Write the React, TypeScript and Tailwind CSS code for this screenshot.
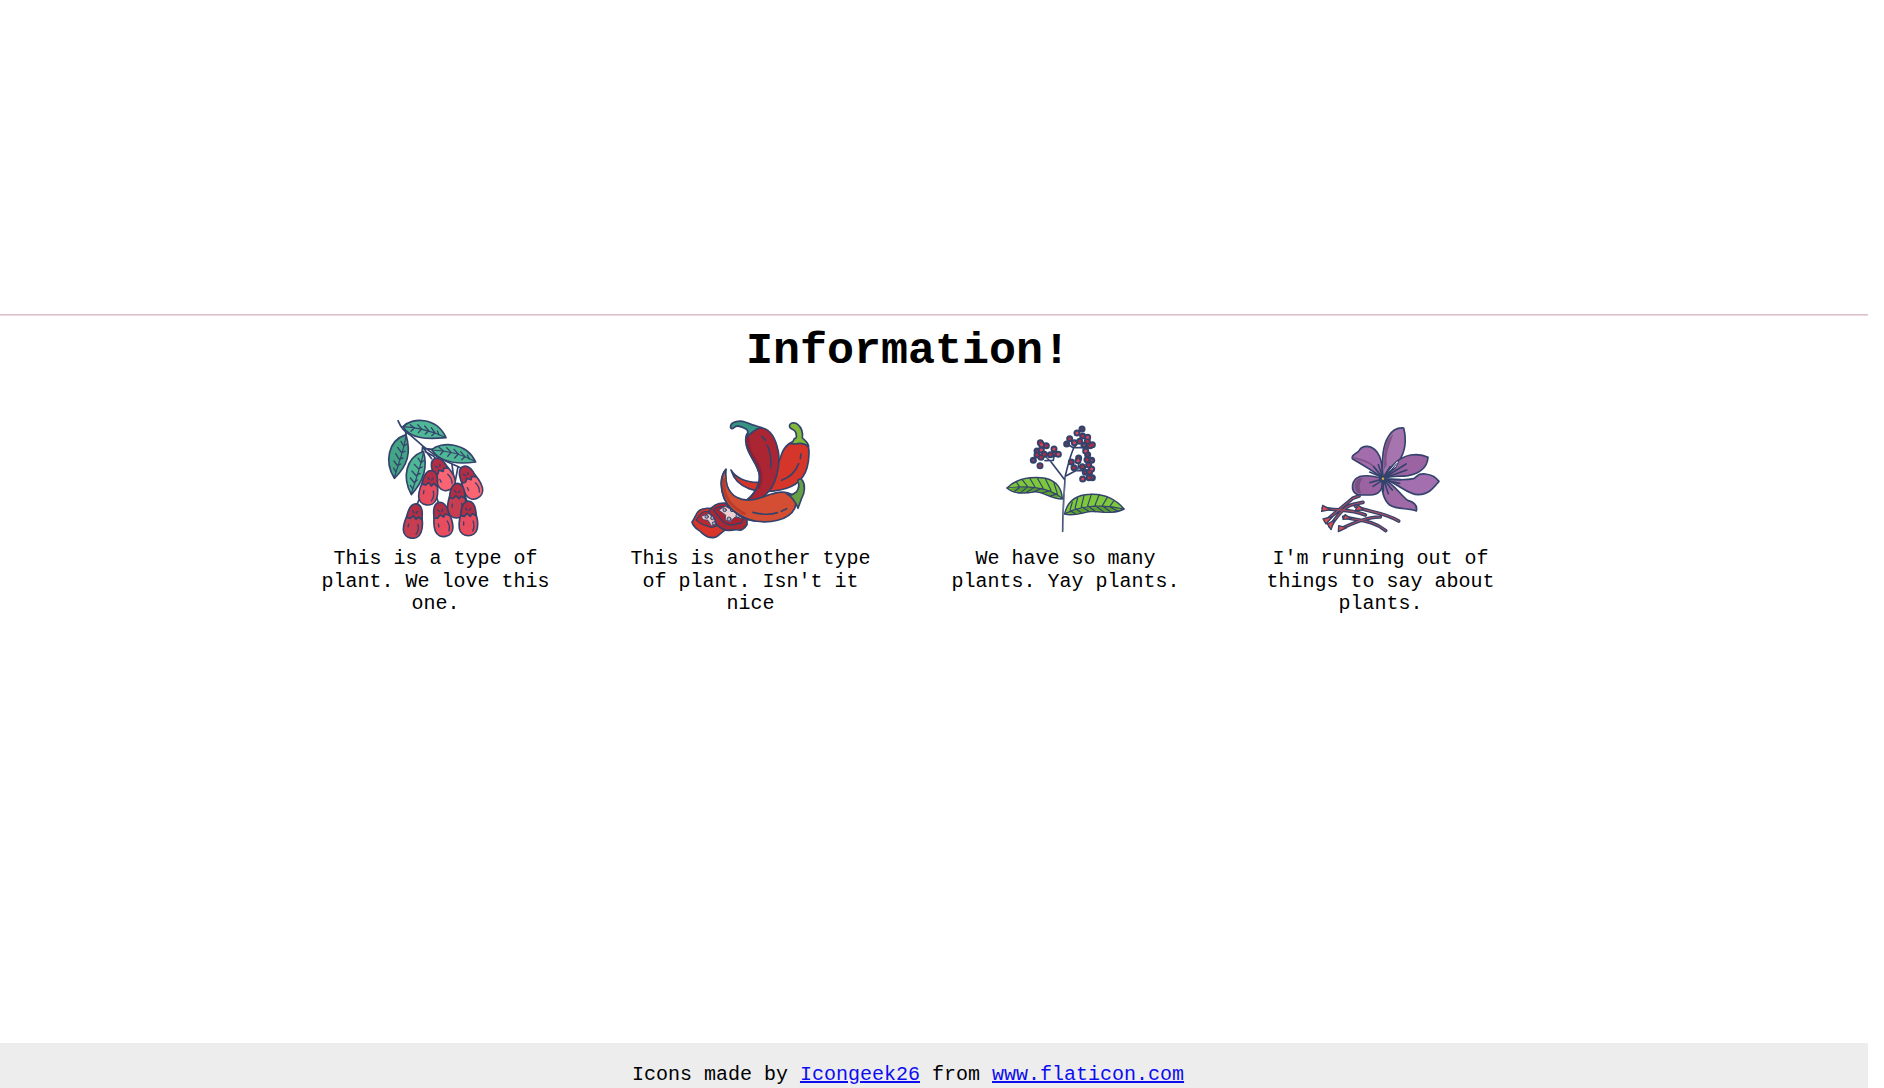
import React from "react";

const INK = "#34436c";

function Leaf({ d, vein, ribs, fill }: { d: string; vein: string; ribs: string; fill: string }) {
  return (
    <g>
      <path d={d} fill={fill} />
      <path d={vein} fill="none" strokeWidth="3.5" />
      <path d={ribs} fill="none" strokeWidth="4" />
    </g>
  );
}

function Berry({ x, y, r, body = "#e94b5f" }: { x: number; y: number; r: number; body?: string }) {
  return (
    <g transform={`translate(${x} ${y}) rotate(${r})`}>
      <path d="M-17 -30C-24 -12 -30 8 -27 28C-22 57 21 58 27 28C31 8 25 -12 18 -30Z" fill={body} />
      <path d="M-23 -10C-22 -36 -15 -53 0 -54C15 -53 23 -36 23 -10L12 -16L6 -8L-4 -17L-12 -8Z" fill="#b32d45" />
      <path d="M14 6C18 16 18 27 13 36M-14 9V18M-8 -32L-3 -26M7 -32L4 -26" fill="none" strokeWidth="4" />
    </g>
  );
}

function BerryBranch() {
  return (
    <svg viewBox="15 41 360 360" className="-ml-px size-[120px]" stroke={INK} strokeWidth="5" strokeLinejoin="round" strokeLinecap="round">
      <path d="M84 46C92 66 103 80 122 90L160 123L205 157L265 184L284 193M106 70L108 92M158 122L156 142M160 128L185 160M166 139L190 152L208 172M188 132L166 130M246 178L254 236M264 184L255 232M150 276L140 300M199 274L206 294M284 268L292 290" fill="none" />
      <Leaf
        fill="#4fb795"
        d="M99 64C126 35 200 35 228 97C173 102 121 102 99 64Z"
        vein="M99 64C140 66 176 73 226 96"
        ribs="M121 58L133 68L123 78M143 58L155 71L145 82M164 62L176 76L166 86M184 67L195 83L185 91M202 77L207 89"
      />
      <Leaf
        fill="#43a486"
        d="M108 88C53 106 43 170 73 219C113 181 124 143 108 88Z"
        vein="M108 92C101 137 87 171 73 216"
        ribs="M93 108L101 122L109 117M83 126L94 141L105 138M77 145L87 161L99 158M72 167L82 181L92 176M71 188L77 199"
      />
      <Leaf
        fill="#4fb795"
        d="M160 138C108 158 95 214 124 268C160 229 174 184 160 138Z"
        vein="M160 142C153 183 138 219 124 265"
        ribs="M144 158L153 172L160 166M133 177L145 190L157 185M126 197L138 211L150 204M121 218L132 231L142 224M121 240L128 250"
      />
      <Leaf
        fill="#4fb795"
        d="M185 133C213 108 290 110 317 170C260 178 211 173 185 133Z"
        vein="M185 134C226 135 268 143 315 168"
        ribs="M207 126L220 137L211 148M230 127L243 141L233 153M252 132L265 146L254 158M272 139L285 154L275 163M292 149L298 161"
      />
      <Berry x={218} y={208} r={-27} body="#fb6472" />
      <Berry x={177} y={249} r={9} />
      <Berry x={301} y={233} r={-25} body="#fb6472" />
      <Berry x={261} y={288} r={2} body="#c83e50" />
      <Berry x={131} y={349} r={9} body="#c83e50" />
      <Berry x={217} y={344} r={-11} />
      <Berry x={295} y={341} r={0} />
    </svg>
  );
}

function Chilies() {
  return (
    <svg viewBox="30 41 360 360" className="-ml-px size-[120px]" stroke={INK} strokeWidth="5" strokeLinejoin="round" strokeLinecap="round">
      <path d="M36 350C45 341 47 323 58 315C69 308 94 307 111 311L137 373C124 379 116 395 101 397C88 398 74 391 64 381C53 371 39 366 36 350Z" fill="#d93529" />
      <path d="M49 344C57 333 61 321 74 319L108 319L119 356C105 363 99 370 85 363C75 359 64 358 59 352Z" fill="#bc2830" strokeWidth="4" />
      <path d="M64 333L89 324L107 342L108 357L94 361L84 345L70 343Z" fill="#e9c7cb" strokeWidth="2.5" />
      <path d="M87 318C97 301 113 292 133 293L185 315L201 336L201 358C193 370 186 376 176 374C160 370 146 381 130 372C118 365 106 359 105 344C103 330 86 331 87 318Z" fill="#aa2734" />
      <path d="M101 314C110 302 133 302 154 305L193 335L184 353C169 353 159 363 143 357C125 352 121 337 112 330Z" fill="#a92232" strokeWidth="4" />
      <path d="M117 314L136 303L157 315L184 324L185 339L165 335L149 350L136 343L137 330Z" fill="#f0cfd2" strokeWidth="2.5" />
      <g fill="#a9adba" strokeWidth="3">
        <circle cx="80" cy="334" r="5" /><circle cx="97" cy="338" r="5" /><circle cx="102" cy="354" r="5" />
        <circle cx="134" cy="314" r="5" /><circle cx="156" cy="314" r="5" /><circle cx="174" cy="331" r="6" /><circle cx="147" cy="341" r="6" />
      </g>
      <path d="M153 194C165 216 196 231 234 231C278 231 290 187 305 146C316 116 339 103 370 110C391 116 388 143 385 169C378 218 350 245 300 254C235 267 170 252 153 194Z" fill="#d63629" />
      <path d="M343 100C351 100 351 90 346 79C343 71 331 72 329 65C325 52 344 49 353 57C364 66 369 83 367 98C374 105 385 112 386 124C374 114 360 112 347 116L331 115C338 110 342 106 343 100Z" fill="#83b93a" />
      <path d="M363 146L361 160M356 175C347 199 330 216 305 225" fill="none" />
      <path d="M199 119C190 80 215 66 236 66C268 67 287 97 295 139C302 183 287 241 259 266C237 286 210 299 182 298C222 273 242 239 238 208C233 174 209 158 199 119Z" fill="#ab2632" />
      <path d="M204 97C201 133 219 153 231 171C244 193 248 222 236 246" fill="none" stroke="#8b2237" strokeWidth="8" />
      <path d="M199 119C209 158 233 174 238 208C242 239 222 273 182 298" fill="none" />
      <path d="M200 96C205 84 207 76 198 71C181 62 170 58 163 66C158 73 150 71 152 61C155 48 180 45 195 50C207 53 215 60 223 60L244 67C225 70 218 80 210 86Z" fill="#359483" />
      <path d="M246 93L257 105M262 119C271 139 274 162 272 187" fill="none" />
      <path d="M138 192C122 209 119 245 132 278C145 311 183 340 224 347C266 354 326 347 344 309C353 286 345 265 315 261C282 256 254 277 219 283C183 289 153 274 142 242C136 223 137 207 138 192Z" fill="#d34e32" />
      <path d="M133 222C127 266 149 302 193 325" fill="none" stroke="#b93c2c" strokeWidth="8" />
      <path d="M138 192C122 209 119 245 132 278C145 311 183 340 224 347" fill="none" />
      <path d="M319 264C330 276 342 266 350 259C357 248 358 238 354 230C351 221 362 218 367 225C377 239 374 264 365 279L354 309C351 296 344 289 339 282C332 272 326 269 319 264Z" fill="#67a044" />
      <path d="M219 321C246 328 273 328 292 322M304 318L320 310" fill="none" />
    </svg>
  );
}

const florets: [number, number][] = [
  [246, 68], [261, 56], [263, 77], [278, 81], [224, 85], [215, 101], [238, 97], [254, 93], [277, 93], [267, 105], [285, 106], [292, 103], [272, 122], [278, 133],
  [136, 97], [140, 103], [154, 106], [126, 122], [139, 119], [148, 132], [126, 134], [115, 150], [138, 141], [135, 166], [177, 116], [178, 130], [166, 133], [190, 132],
  [229, 155], [251, 143], [249, 151], [237, 172], [276, 148], [290, 150], [281, 164], [262, 169], [290, 176], [271, 186], [284, 185], [263, 206], [282, 202], [292, 202],
];

function FlowerStem() {
  return (
    <svg viewBox="30 26 360 360" className="-ml-px size-[120px]" stroke={INK} strokeWidth="4.5" strokeLinejoin="round" strokeLinecap="round">
      <path d="M203 363C203 305 207 248 211 196C218 168 223 144 236 113L260 82M208 207L166 152L140 128M211 198L242 181L274 181M150 151L175 150L178 127M236 113L216 101M237 111L280 112M238 108L252 91M242 181L230 157M248 181L252 154M265 181L282 157" fill="none" strokeWidth="5" />
      <path d="M204 361C204 305 208 248 212 200M164 148L144 130M238 107L250 92M244 179L262 176" fill="none" stroke="#9cacbd" strokeWidth="1.7" />
      <g fill={INK} stroke="none">
        {florets.map(([x, y], i) => <circle key={i} cx={x} cy={y} r={10.5} />)}
      </g>
      <g stroke="none">
        {florets.map(([x, y], i) => <circle key={i} cx={x} cy={y} r={i % 4 === 1 ? 2.5 : 4.5} fill={i % 3 ? "#b02d42" : "#df455a"} />)}
      </g>
      <path d="M36 233C64 205 98 199 138 202C175 204 200 226 202 266C169 267 145 243 119 244C84 251 53 249 36 233Z" fill="#7ec83e" />
      <path d="M43 236C93 228 151 226 194 259C166 264 145 239 116 241C90 248 65 246 43 236Z" fill="#5aa02f" stroke="none" />
      <path d="M36 233C92 225 162 230 202 264M64 215L75 231L57 244M81 207L98 229L77 247M104 203L120 230L95 246M127 203L144 233L116 244M151 205L168 240L141 248M176 215L187 250L164 258" fill="none" strokeWidth="3.5" />
      <path d="M209 311C216 276 241 254 285 252C329 249 365 269 387 296C361 311 326 305 291 303C262 306 239 319 209 311Z" fill="#7ec83e" />
      <path d="M218 308C267 289 322 285 378 295C344 308 312 300 285 300C260 308 236 314 218 308Z" fill="#5aa02f" stroke="none" />
      <path d="M209 310C257 285 326 281 387 296M232 275L225 300L242 312M248 263L240 293L261 309M267 256L259 289L284 304M289 253L278 286L302 304M313 252L300 285L326 305M337 261L322 286L347 305M356 272L344 289L368 303" fill="none" strokeWidth="3.5" />
    </svg>
  );
}

function Saffron() {
  return (
    <svg viewBox="30 11 360 360" className="-ml-px size-[120px]" stroke={INK} strokeWidth="5" strokeLinejoin="round" strokeLinecap="round">
      <path d="M219 190C221 223 205 239 181 239L144 239C118 227 125 192 148 184C173 177 203 185 219 190Z" fill="#9b63a2" />
      <path d="M146 190C130 198 132 220 144 234L154 234C146 218 148 199 159 188Z" fill="#765080" stroke="none" />
      <path d="M219 190C187 163 161 151 127 130C122 115 146 116 149 103C159 89 184 88 201 110C217 131 216 157 219 190Z" fill="#a36cad" />
      <path d="M130 126C160 137 183 137 205 169" fill="none" stroke="#805588" strokeWidth="5" />
      <path d="M219 190C215 142 216 93 235 64C247 43 266 37 281 38C289 71 289 104 267 137C251 154 233 164 219 190Z" fill="#a675b0" />
      <path d="M232 74C221 102 220 137 222 163L231 148C225 116 240 87 250 55Z" fill="#805588" stroke="none" />
      <path d="M219 190C242 153 264 126 302 119C323 116 343 120 354 126C352 158 325 175 294 181C266 185 246 179 219 190Z" fill="#9b63a2" />
      <path d="M219 190C254 193 281 197 311 190C326 183 319 174 346 176C368 178 377 187 387 198C367 222 355 237 325 238C292 238 267 205 219 190Z" fill="#a46fae" />
      <path d="M219 190C211 217 220 253 239 269C261 284 297 277 319 287C323 271 311 260 293 255C272 241 255 207 219 190Z" fill="#a06aa7" />
      <path d="M219 188L191 154M216 186L179 170M218 184L205 148M218 191L180 202M217 195L189 213M219 188L240 154M223 184L256 157M222 188L288 146M224 188L290 164M222 191L273 193M223 194L269 204M220 191L247 224M221 194L235 235M219 192L220 228" fill="none" strokeWidth="5" />
      <path d="M231 173L261 136L266 139L259 154Z" fill="#dfd9e5" strokeWidth="3" />
      <path d="M243 165L260 145" strokeWidth="3" />
      <circle cx="219" cy="190" r="12" fill={INK} stroke="none" />
      <circle cx="219" cy="190" r="3.5" fill="#dcae50" stroke="none" />
      <g fill="none" strokeWidth="11">
        <path d="M40 278C75 287 122 279 166 299M47 317L128 249L147 242M60 333C85 298 101 273 133 266L159 261M137 273C173 291 220 289 266 317M101 305C147 316 190 315 227 346M90 342C124 325 168 304 211 305" />
      </g>
      <g fill="none" stroke="#a34d62" strokeWidth="3.5">
        <path d="M40 278C75 287 122 279 166 299M47 317L128 249L147 242M60 333C85 298 101 273 133 266L159 261M137 273C173 291 220 289 266 317M101 305C147 316 190 315 227 346M90 342C124 325 168 304 211 305" />
      </g>
      <g fill="#e04a48" strokeWidth="4">
        <path d="M38 270L35 288L62 283ZM39 311L48 326L68 304ZM52 326L63 343L74 314ZM145 269L135 287L160 283ZM105 298L99 312L124 310ZM86 331L85 349L110 337Z" />
      </g>
    </svg>
  );
}

const plants = [
  { Icon: BerryBranch, text: "This is a type of plant. We love this one." },
  { Icon: Chilies, text: "This is another type of plant. Isn't it nice" },
  { Icon: FlowerStem, text: "We have so many plants. Yay plants." },
  { Icon: Saffron, text: "I'm running out of things to say about plants." },
];

export default function App() {
  return (
    <div className="flex h-[1088px] w-[1868px] flex-col overflow-hidden bg-white font-['Liberation_Mono',monospace] text-[20px] leading-[22.5px] text-black">
      <header className="h-[314px] shrink-0" />
      <main className="grow">
        <div className="h-px bg-[#dcbec7]" />
        <div className="h-px bg-[#eddade]" />
        <section className="flex w-[1816px] flex-col items-center pt-[10px]">
          <h1 className="text-[45px] leading-[51px] font-bold">Information!</h1>
          <div className="mt-[42px] flex gap-[65px]">
            {plants.map(({ Icon, text }) => (
              <article key={text} className="flex w-[250px] flex-col items-center">
                <Icon />
                <p className="mt-[9px] text-center">{text}</p>
              </article>
            ))}
          </div>
        </section>
      </main>
      <footer className="h-[45px] shrink-0 bg-[#ededed] pt-[21px]">
        <p className="w-[1816px] text-center">
          Icons made by <a href="#" className="text-[#0d0df0] underline">Icongeek26</a> from{" "}
          <a href="#" className="text-[#0d0df0] underline">www.flaticon.com</a>
        </p>
      </footer>
    </div>
  );
}
